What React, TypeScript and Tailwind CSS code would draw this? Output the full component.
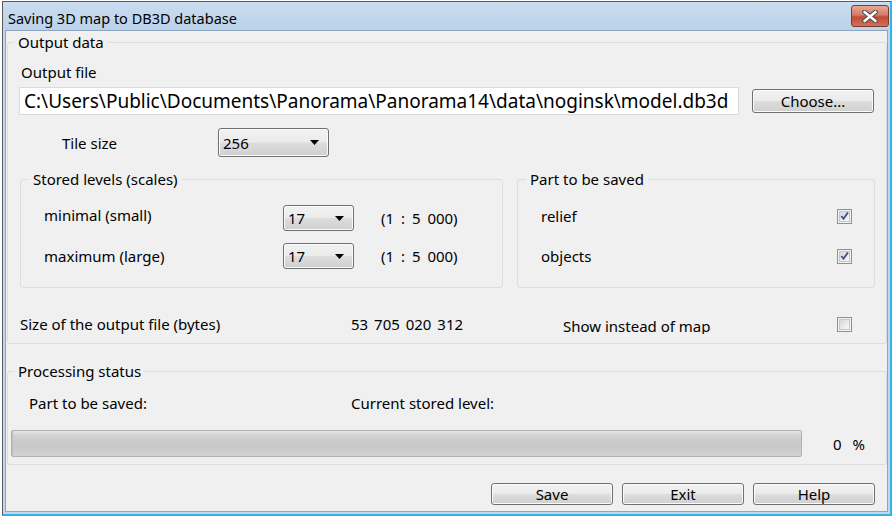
import React from 'react'

const BTN_BG =
  'bg-[linear-gradient(to_bottom,#f2f2f2_0%,#ebebeb_48%,#dddddd_52%,#cfcfcf_100%)] shadow-[inset_0_0_0_1px_#fbfbfb]'

function Button({ label, className = '' }: { label: string; className?: string }) {
  return (
    <div className={`flex items-center justify-center border border-[#707070] rounded-[3px] text-black ${BTN_BG} ${className}`}>
      {label}
    </div>
  )
}

function Combo({ value, className = '' }: { value: string; className?: string }) {
  return (
    <div className={`flex items-center justify-between border border-[#707070] rounded-[3px] pl-[4px] pr-[9px] ${BTN_BG} ${className}`}>
      <span>{value}</span>
      <svg width="9" height="5" viewBox="0 0 9 5">
        <path d="M0 0h9L4.5 5z" fill="#000" />
      </svg>
    </div>
  )
}

function CheckBox({ checked }: { checked?: boolean }) {
  return (
    <div className="w-[15px] h-[15px] border border-[#8f8f8f] bg-[#f4f4f4] p-[1px] shrink-0">
      <div className="w-full h-full border border-[#c6c6c6] bg-[linear-gradient(135deg,#d8d8d8,#f9f9f9)] flex items-center justify-center">
        {checked && (
          <svg width="10" height="10" viewBox="0 0 10 10">
            <path d="M1.5 5l2.4 3L8.8 1" fill="none" stroke="#3d4f8c" strokeWidth="2" />
          </svg>
        )}
      </div>
    </div>
  )
}

function GroupBox({ title, legendClass = 'ml-[6px]', className = '', children }: {
  title: string
  legendClass?: string
  className?: string
  children: React.ReactNode
}) {
  return (
    <fieldset className={`border border-[#d5dfe5] rounded-[3px] min-w-0 ${className}`}>
      <legend className={`px-[4px] leading-5 ${legendClass}`}>{title}</legend>
      {children}
    </fieldset>
  )
}

export default function App() {
  return (
    <div className="w-[895px] h-[517px] bg-white overflow-hidden font-['Noto_Sans',sans-serif] text-[15px] leading-5 text-black">
      <div className="ml-[2px] mt-[1px] w-[890px] h-[515px] flex flex-col bg-[#c3d7ee] border-l border-t border-[#5a5a5a] border-r-2 border-b-2 border-r-[#30b4e4] border-b-[#30b4e4]">
        {/* title bar */}
        <div className="h-[28px] shrink-0 flex items-start justify-between pl-[5px] pr-[1px] bg-[linear-gradient(to_bottom,#c9dcf0,#bcd2ea)]">
          <span className="mt-[6px] text-[14.5px]">Saving 3D map to DB3D database</span>
          <div className="mt-[3px] w-[38px] h-[22px] rounded-[3px] border border-[#7d3a30] bg-[linear-gradient(to_bottom,#e9a797_0%,#d47c68_45%,#c24a35_55%,#d2715c_100%)] flex items-center justify-center">
            <svg width="16" height="13" viewBox="0 0 16 13">
              <path d="M2.5 2 L13.5 11 M13.5 2 L2.5 11" stroke="#4a4a4a" strokeWidth="4.6" strokeLinecap="round" />
              <path d="M2.5 2 L13.5 11 M13.5 2 L2.5 11" stroke="#ffffff" strokeWidth="2.6" strokeLinecap="round" />
            </svg>
          </div>
        </div>

        {/* client area */}
        <div className="mx-[2px] mb-[2px] flex-1 border border-[#8fa4bd] bg-[#f0f0f0] flex flex-col">
          <GroupBox title="Output data" className="ml-[1px] mt-[1px] w-[880px] h-[312px]">
            <div className="mt-[10px] ml-[13px]">Output file</div>
            <div className="mt-[5px] ml-[11px] flex items-center gap-[13px]">
              <div className="w-[720px] h-[28px] border border-[#dadada] bg-white pl-[4px] flex items-center whitespace-nowrap overflow-hidden text-[19px]">
                C:\Users\Public\Documents\Panorama\Panorama14\data\noginsk\model.db3d
              </div>
              <Button label="Choose..." className="w-[122px] h-[24px]" />
            </div>

            <div className="mt-[13px] ml-[54px] flex items-center">
              <div className="w-[156px]">Tile size</div>
              <Combo value="256" className="w-[111px] h-[29px]" />
            </div>

            <div className="mt-[12px] ml-[12px] flex gap-[14px]">
              <GroupBox title="Stored levels (scales)" legendClass="ml-[8px]" className="w-[483px] h-[119px]">
                <div className="mt-[16px] pl-[23px] flex items-center h-[26px]">
                  <div className="w-[239px] mb-[6px]">minimal (small)</div>
                  <Combo value="17" className="w-[71px] h-[26px]" />
                  <div className="ml-[27px] [word-spacing:3px]">(1 : 5 000)</div>
                </div>
                <div className="mt-[12px] pl-[23px] flex items-center h-[26px]">
                  <div className="w-[239px]">maximum (large)</div>
                  <Combo value="17" className="w-[71px] h-[26px]" />
                  <div className="ml-[27px] [word-spacing:3px]">(1 : 5 000)</div>
                </div>
              </GroupBox>

              <GroupBox title="Part to be saved" legendClass="ml-[8px]" className="w-[358px] h-[119px]">
                <div className="mt-[17px] pl-[23px] pr-[22px] h-[20px] flex items-center justify-between">
                  <span>relief</span>
                  <CheckBox checked />
                </div>
                <div className="mt-[20px] pl-[23px] pr-[22px] h-[20px] flex items-center justify-between">
                  <span>objects</span>
                  <CheckBox checked />
                </div>
              </GroupBox>
            </div>

            <div className="mt-[26px] ml-[12px] h-[20px] flex items-center">
              <div className="w-[331px]">Size of the output file (bytes)</div>
              <div className="w-[212px] [word-spacing:2px]">53 705 020 312</div>
              <div className="w-[274px] h-[18px] mt-[1px] overflow-hidden">Show instead of map</div>
              <CheckBox />
            </div>
          </GroupBox>

          <GroupBox title="Processing status" className="ml-[1px] mt-[17px] w-[880px] h-[104px]">
            <div className="mt-[12px] pl-[21px] flex">
              <div className="w-[322px]">Part to be saved:</div>
              <div>Current stored level:</div>
            </div>
            <div className="mt-[17px] ml-[3px] flex items-center">
              <div className="w-[791px] h-[27px] rounded-[2px] border border-[#b2b2b2] bg-[linear-gradient(to_bottom,#e6e6e6_0%,#d0d0d0_20%,#c8c8c8_60%,#d2d2d2_100%)] shadow-[inset_1px_0_0_#bdbdbd]" />
              <span className="ml-[31px]">0</span>
              <span className="ml-[11px]">%</span>
            </div>
          </GroupBox>

          <div className="mt-[18px] pr-[12px] flex justify-end gap-[9px]">
            <Button label="Save" className="w-[122px] h-[22px]" />
            <Button label="Exit" className="w-[122px] h-[22px]" />
            <Button label="Help" className="w-[122px] h-[22px]" />
          </div>
        </div>
      </div>
    </div>
  )
}
